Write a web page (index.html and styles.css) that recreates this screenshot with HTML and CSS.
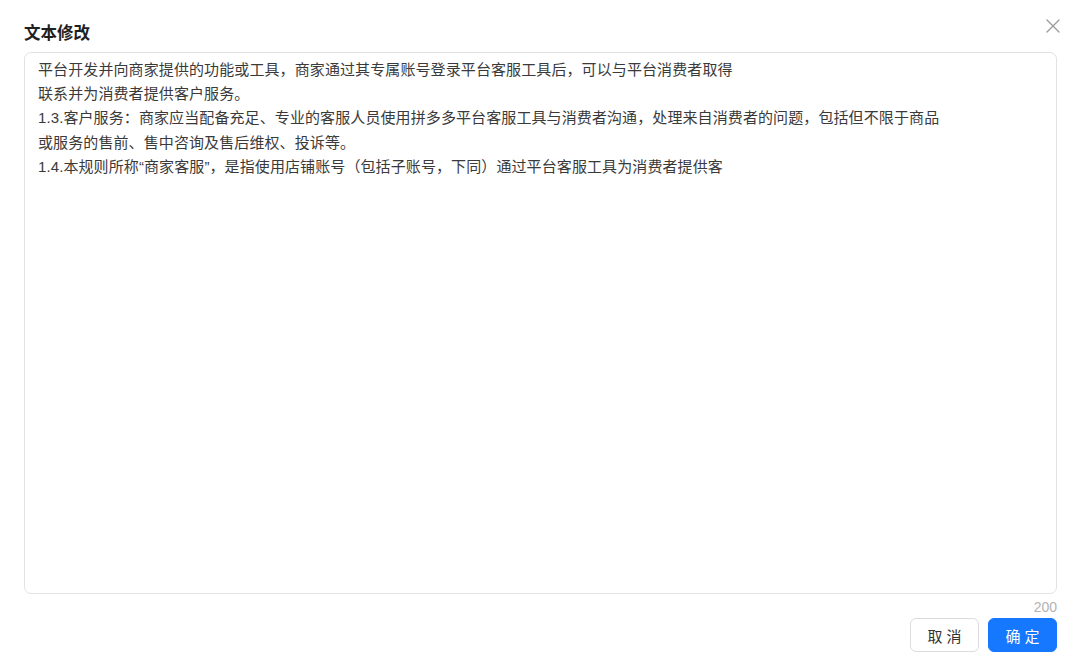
FILE: index.html
```html
<!DOCTYPE html>
<html lang="zh-CN">
<head>
<meta charset="utf-8">
<title>文本修改</title>
<link rel="stylesheet" href="styles.css">
</head>
<body>
<div class="dialog">
  <div class="header">
    <h1 class="title">文本修改</h1>
    <button class="close" aria-label="关闭">
      <svg width="14" height="14" viewBox="0 0 14 14"><path d="M1 1L13 13M13 1L1 13" stroke="#9a9a9a" stroke-width="1.3" fill="none" stroke-linecap="round"/></svg>
    </button>
  </div>
  <div class="editor">平台开发并向商家提供的功能或工具，商家通过其专属账号登录平台客服工具后，可以与平台消费者取得
联系并为消费者提供客户服务。
1.3.客户服务：商家应当配备充足、专业的客服人员使用拼多多平台客服工具与消费者沟通，处理来自消费者的问题，包括但不限于商品
或服务的售前、售中咨询及售后维权、投诉等。
1.4.本规则所称“商家客服”，是指使用店铺账号（包括子账号，下同）通过平台客服工具为消费者提供客</div>
  <div class="count">200</div>
  <div class="footer">
    <button class="btn btn-default">取消</button>
    <button class="btn btn-primary">确定</button>
  </div>
</div>
</body>
</html>
```

FILE: styles.css
```css
* { box-sizing: border-box; }
html, body { margin: 0; padding: 0; background: #ffffff; }
body {
  font-family: "Noto Sans CJK SC", "Liberation Sans", sans-serif;
  color: #333333;
}
.dialog {
  width: 1080px;
  height: 671px;
  padding: 20px 23px 0 24px;
  display: flex;
  flex-direction: column;
}
.header {
  display: flex;
  align-items: center;
  justify-content: space-between;
  height: 24px;
}
.title {
  margin: 0;
  font-size: 16.5px;
  line-height: 24px;
  font-weight: 700;
  color: #1f1f1f;
}
.close {
  border: 0;
  background: none;
  padding: 0;
  margin: -12px -3px 0 0;
  width: 14px;
  height: 14px;
  display: flex;
  cursor: pointer;
}
.editor {
  margin-top: 8px;
  height: 542px;
  border: 1px solid #e2e2e2;
  border-radius: 7px;
  padding: 5px 13px;
  font-family: "Liberation Sans", "Noto Sans CJK SC", sans-serif;
  font-size: 15px;
  line-height: 24.2px;
  color: #3a3a3a;
  white-space: pre-wrap;
  letter-spacing: 0.1px;
}
.count {
  text-align: right;
  font-family: "Liberation Sans", sans-serif;
  font-size: 14px;
  line-height: 18px;
  color: #b3b3b3;
  margin-top: 4px;
}
.footer {
  display: flex;
  justify-content: flex-end;
  gap: 9px;
  margin-top: 2px;
}
.btn {
  width: 69px;
  height: 34px;
  border-radius: 6px;
  font-family: "Noto Sans CJK SC", sans-serif;
  font-size: 15px;
  letter-spacing: 4px;
  padding: 0 0 0 4px;
  display: flex;
  align-items: center;
  justify-content: center;
  cursor: pointer;
}
.btn-default {
  background: #ffffff;
  border: 1px solid #dcdcdc;
  color: #333333;
}
.btn-primary {
  background: #1677ff;
  border: 1px solid #1677ff;
  color: #ffffff;
}
```
